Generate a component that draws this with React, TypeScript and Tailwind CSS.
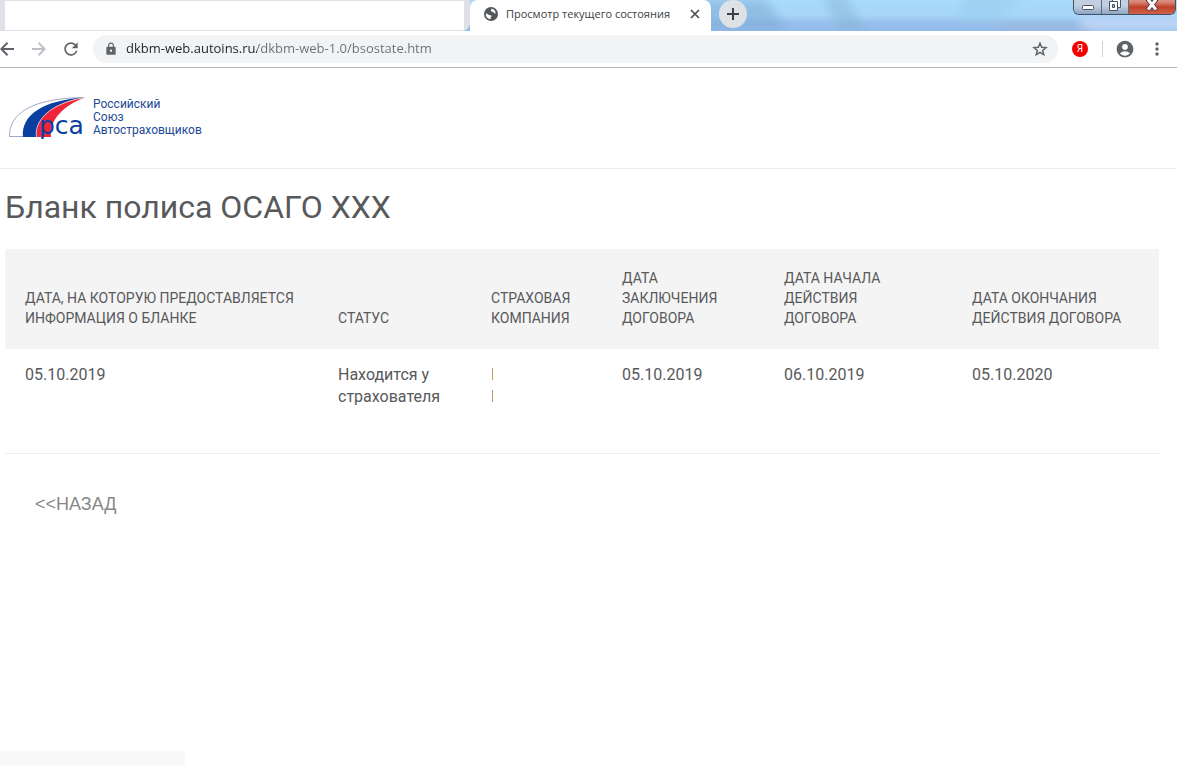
import React from 'react';
import { MdAccountCircle, MdLock, MdMoreVert, MdRefresh } from 'react-icons/md';

const columns = [
  { title: 'Дата, на которую предоставляется\nинформация о бланке', width: 'w-[313px]' },
  { title: 'Статус', width: 'w-[153px]' },
  { title: 'Страховая\nкомпания', width: 'w-[131px]' },
  { title: 'Дата\nзаключения\nдоговора', width: 'w-[162px]' },
  { title: 'Дата начала\nдействия\nдоговора', width: 'w-[188px]' },
  { title: 'Дата окончания\nдействия договора', width: 'w-auto' },
];

const WindowControls = () => (
  <div className="flex h-[15px] mr-px rounded-b-md border border-t-0 border-[#3f5068] overflow-hidden">
    <button aria-label="Свернуть" className="w-7 flex justify-center border-r border-[#5b6b82] bg-linear-to-b from-[#c2d0e2] from-40% to-[#8fa5c2]">
      <svg className="w-4 h-3" viewBox="0 0 16 12">
        <rect x="2.5" y="5.5" width="11" height="4" rx="1" fill="#fff" stroke="#4a5261" />
      </svg>
    </button>
    <button aria-label="Развернуть" className="w-[27px] flex justify-center border-r border-[#5b6b82] bg-linear-to-b from-[#c2d0e2] from-40% to-[#8fa5c2]">
      <svg className="w-4 h-3" viewBox="0 0 16 12">
        <path d="M5.5 -1.5h8v9h-8z" fill="#fff" stroke="#4a5261" />
        <path d="M2.5 1.5h8v9h-8z" fill="#fff" stroke="#4a5261" />
        <path d="M5.5 4.5h2v3h-2z" fill="#9fb2cb" stroke="#4a5261" />
      </svg>
    </button>
    <button aria-label="Закрыть" className="w-[46px] flex justify-center bg-linear-to-b from-[#d98d7e] from-10% via-[#c0402a] via-50% to-[#cf6247]">
      <svg className="w-4 h-3" viewBox="0 0 16 12">
        <path d="M3.5 -1 12.5 10M12.5 -1 3.5 10" stroke="#5b3a3a" strokeWidth="5" />
        <path d="M4 -.5 12 9.500M12 -.5 4 9.500" stroke="#fff" strokeWidth="3" />
      </svg>
    </button>
  </div>
);

const TitleBar = () => (
  <div className="relative flex h-[31px] bg-[#a3cef5]">
    {/* Glass background */}
    <svg className="absolute inset-0 w-full h-full" viewBox="0 0 1177 31" preserveAspectRatio="none">
      <defs>
        <linearGradient id="glass" x1="0" y1="0" x2="0" y2="1">
          <stop offset="0" stopColor="#a9dbfb" />
          <stop offset=".5" stopColor="#a6d6f8" />
          <stop offset=".72" stopColor="#98c1ec" />
          <stop offset="1" stopColor="#94bbea" />
        </linearGradient>
        <filter id="soft" x="-20%" y="-50%" width="140%" height="200%">
          <feGaussianBlur stdDeviation="5" />
        </filter>
      </defs>
      <rect width="1177" height="31" fill="url(#glass)" />
      <g filter="url(#soft)">
        <path d="M700 0h66l22 31h-88z" fill="#7ba9d6" opacity=".55" />
        <path d="M822 -5h22l25 40h-28z" fill="#86b4d8" opacity=".5" />
        <path d="M965 -5h60l-30 25h-40z" fill="#96cdee" opacity=".6" />
        <path d="M1080 18h110v12h-110z" fill="#c6dcf8" opacity=".9" />
        <path d="M1000 27h90v4h-90z" fill="#9dabc2" opacity=".7" />
      </g>
    </svg>

    {/* Background tab */}
    <div className="relative w-[470px] pl-[5px] pr-1.5 py-px rounded-br-lg bg-[#dee1e6]">
      <div className="h-full bg-white" />
    </div>

    {/* Active tab */}
    <div className="relative w-[241px] flex items-center pl-3.5 pr-2 pb-[3px] bg-white rounded-t-lg">
      <svg className="size-3.5 shrink-0" viewBox="0 0 14 14">
        <circle cx="7" cy="7" r="7" fill="#54585d" />
        <path d="M2 6.500c2 0 2.500 2 4.500 1.800 1.200 0 1.300 1.700.3 2l-.3 2C3.800 12 2 10 1.800 7.500zM7 2.500c-.3 2 .5 2 1.500 2.200 1.500.3 1.200 2 3.200 1.800C11.500 4 10 2.200 8 1.800z" fill="#fff" />
      </svg>
      <span className="ml-2 flex-1 overflow-hidden whitespace-nowrap text-[11px] text-[#3c4043]">
        Просмотр текущего состояния
      </span>
      <button aria-label="Закрыть вкладку" className="ml-1 size-4 flex items-center justify-center">
        <svg className="size-4" viewBox="0 0 16 16">
          <path d="M4 4l8 8M12 4l-8 8" stroke="#4a4d51" strokeWidth="1.700" />
        </svg>
      </button>
    </div>

    <button aria-label="Новая вкладка" className="relative ml-2 size-7 rounded-full bg-[#dee1e6] flex items-center justify-center">
      <svg className="size-4" viewBox="0 0 16 16">
        <path d="M8 2v12M2 8h12" stroke="#3c4043" strokeWidth="2" />
      </svg>
    </button>

    <div className="relative ml-auto">
      <WindowControls />
    </div>
  </div>
);

const Toolbar = () => (
  <div className="flex items-center h-[37px] pr-2.5 border-b border-[#b4b6b8] bg-white text-[#5f6368]">
    <button aria-label="Назад" className="w-3.5">
      <svg className="size-3.5" viewBox="0 0 14 14" fill="none" stroke="currentColor" strokeWidth="2">
        <path d="M14 7H1.500M7.500 .8 1.300 7l6.200 6.200" />
      </svg>
    </button>
    <button aria-label="Вперёд" className="ml-[18px] text-[#bdc1c6]">
      <svg className="size-3.5" viewBox="0 0 14 14" fill="none" stroke="currentColor" strokeWidth="2">
        <path d="M0 7h12.500M6.500 .8 12.700 7l-6.200 6.200" />
      </svg>
    </button>
    <button aria-label="Обновить" className="ml-[15px]">
      <MdRefresh className="size-5" />
    </button>
    <div className="ml-3 flex-1 flex items-center h-7 rounded-full bg-[#f1f3f4] px-2.5">
      <MdLock className="size-3.5 ml-px" />
      <input
        aria-label="Адресная строка"
        className="ml-2 flex-1 text-[13px] outline-none bg-clip-text text-transparent bg-linear-to-r from-[#202124] from-[131px] to-[#6b6f74] to-[131px]"
        defaultValue="dkbm-web.autoins.ru/dkbm-web-1.0/bsostate.htm"
      />
      <button aria-label="Добавить в закладки">
        <svg className="size-4" viewBox="0 0 16 16" fill="none" stroke="currentColor" strokeWidth="1.500">
          <path d="M8 2.200l1.700 4 4.300.4-3.300 2.800 1 4.200L8 11.400l-3.700 2.200 1-4.200L2 6.600l4.300-.4z" />
        </svg>
      </button>
    </div>
    <button aria-label="Яндекс" className="ml-3.5 size-4 rounded-full bg-[#f20000] text-white text-[10px] leading-4 font-[Roboto,sans-serif]">
      Я
    </button>
    <div className="ml-3.5 w-px h-4 bg-[#cfd1d4]" />
    <button aria-label="Профиль" className="ml-3">
      <MdAccountCircle className="size-5" />
    </button>
    <button aria-label="Меню" className="ml-3">
      <MdMoreVert className="size-5" />
    </button>
  </div>
);

const Logo = () => (
  <a href="#" className="flex">
    <svg className="w-[78px] h-[44px]" viewBox="0 0 78 44">
      <path d="M.5 40.500C0 18 22 2 76 1.500" fill="none" stroke="#8796b5" strokeWidth=".8" />
      <path d="M.5 40.500h14" stroke="#8796b5" strokeWidth=".8" />
      <path d="M14 41C12 19 34 4 76 1.500 46 8 29 20 29 41z" fill="#0a3ea0" />
      <path d="M28 41C25 24 42 6 76 1.500 55 9 40 24 42 41z" fill="#ee2438" />
      <path d="M27.500 41C25 24 42 7 76 1.500" fill="none" stroke="#fff" strokeWidth=".7" />
      <text x="30" y="38" fill="#0a3ea0" fontSize="25" fontFamily="DejaVu Sans">рса</text>
    </svg>
    <span className="ml-1.5 pt-0.5 font-[Roboto,sans-serif] text-xs leading-[13px] text-[#1d4a94]">
      Российский<br />Союз<br />Автостраховщиков
    </span>
  </a>
);

const PolicyTable = () => (
  <table className="w-full table-fixed text-left text-[#58595b]">
    <thead className="bg-[#f4f4f4] text-sm">
      <tr>
        {columns.map((column) => (
          <th key={column.title} className={`${column.width} pl-5 pt-[19px] pb-[21px] align-bottom font-normal uppercase whitespace-pre-line`}>
            {column.title}
          </th>
        ))}
      </tr>
    </thead>
    <tbody>
      <tr className="border-b border-[#ececec] align-top text-base leading-[22px] [&>td]:pl-5 [&>td]:pt-[15px] [&>td]:pb-[45px]">
        <td>05.10.2019</td>
        <td>Находится у страхователя</td>
        <td>
          <div className="h-[22px] pt-1"><i className="block w-px h-3 ml-px bg-[#c49a5c]" /></div>
          <div className="h-[22px] pt-1"><i className="block w-px h-3 ml-px bg-[#c49a5c]" /></div>
        </td>
        <td>05.10.2019</td>
        <td>06.10.2019</td>
        <td>05.10.2020</td>
      </tr>
    </tbody>
  </table>
);

const App = () => {
  return (
    <div className="min-h-screen flex flex-col bg-white">
      <div className="font-['Open_Sans',sans-serif]">
        <TitleBar />
        <Toolbar />
      </div>

      <header className="pl-[9px] pt-7 pb-7 border-b border-[#ececec]">
        <Logo />
      </header>

      <main className="flex-1 pl-[5px] pr-[18px] font-[Roboto,sans-serif]">
        <h1 className="pt-[18px] pb-[22px] text-[32px] leading-10 text-[#58595b]">Бланк полиса ОСАГО XXX</h1>
        <PolicyTable />
        <a href="#" className="inline-block mt-9 ml-[30px] font-['Liberation_Sans',sans-serif] text-lg text-[#888]">
          &lt;&lt;НАЗАД
        </a>
      </main>

      {/* Status bubble */}
      <div className="w-[185px] h-3.5 bg-[#f8f8f8]" />
    </div>
  );
};

export default App;
